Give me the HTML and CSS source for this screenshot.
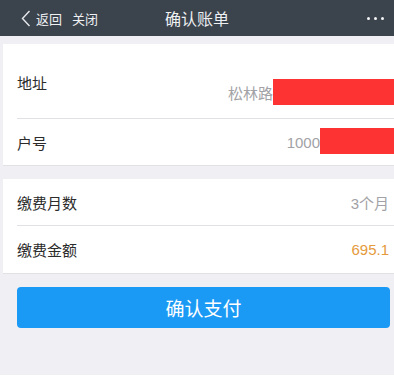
FILE: index.html
```html
<!DOCTYPE html>
<html lang="zh-CN">
<head>
    <meta charset="UTF-8">
    <meta name="viewport" content="width=device-width, initial-scale=1.0">
    <title>确认账单</title>
    <link rel="stylesheet" href="styles.css">
</head>
<body>
    <header class="top-bar">
        <div class="nav-left">
            <svg class="back-icon" width="10" height="17" viewBox="0 0 10 17">
                <path d="M8.5 1 L1.5 8.5 L8.5 16" fill="none" stroke="#e6e8eb" stroke-width="1.4"/>
            </svg>
            <span class="nav-link">返回</span>
            <span class="nav-link close">关闭</span>
        </div>
        <h1 class="page-title">确认账单</h1>
        <div class="more-dots">
            <span></span><span></span><span></span>
        </div>
    </header>

    <main class="content">
        <section class="card">
            <div class="row address-row">
                <span class="row-label">地址</span>
                <span class="row-value masked">松林路<span class="mask"></span></span>
            </div>
            <div class="row short-row">
                <span class="row-label">户号</span>
                <span class="row-value masked">1000<span class="mask short"></span></span>
            </div>
        </section>

        <section class="card">
            <div class="row">
                <span class="row-label">缴费月数</span>
                <span class="row-value">3个月</span>
            </div>
            <div class="row">
                <span class="row-label">缴费金额</span>
                <span class="row-value amount">695.1</span>
            </div>
        </section>

        <button class="pay-btn">确认支付</button>
    </main>

    <footer class="bottom-strip"></footer>
</body>
</html>
```

FILE: styles.css
```css
:root {
    --bar-bg: #3b434d;
    --page-bg: #efeff4;
    --line: #e1e1e5;
    --text-dark: #2b2b2b;
    --text-gray: #a2a2a6;
    --amount-color: #e59a3c;
    --btn-blue: #1b9af5;
    --mask-red: #fd3232;
}

* {
    margin: 0;
    padding: 0;
    box-sizing: border-box;
    font-family: "Liberation Sans", "Noto Sans CJK SC", sans-serif;
}

body {
    background-color: var(--page-bg);
    width: 394px;
    height: 380px;
    overflow: hidden;
}

.top-bar {
    height: 36px;
    background-color: var(--bar-bg);
    display: flex;
    align-items: center;
    position: relative;
    color: #eef0f2;
}

.nav-left {
    display: flex;
    align-items: center;
    padding-left: 21px;
}

.back-icon {
    margin-right: 5px;
}

.nav-link {
    font-size: 13px;
}

.nav-link.close {
    margin-left: 10px;
}

.page-title {
    position: absolute;
    left: 0;
    right: 0;
    text-align: center;
    font-size: 16px;
    font-weight: normal;
    pointer-events: none;
}

.more-dots {
    margin-left: auto;
    margin-right: 10px;
    display: flex;
    gap: 4px;
}

.more-dots span {
    width: 3px;
    height: 3px;
    border-radius: 50%;
    background-color: #f4f5f6;
}

.content {
    padding: 8px 0 0 3px;
    height: 339px;
}

.card {
    background-color: #fff;
    padding-left: 14px;
    border-bottom: 1px solid var(--line);
    margin-bottom: 13px;
}

.row {
    height: 47px;
    display: flex;
    align-items: center;
    justify-content: space-between;
    border-bottom: 1px solid var(--line);
    padding-right: 5px;
}

.row:last-child {
    border-bottom: none;
}

.short-row {
    height: 46px;
}

.row-label {
    font-size: 15px;
    color: var(--text-dark);
}

.row-value {
    font-size: 15px;
    color: var(--text-gray);
    display: flex;
    align-items: center;
}

.row-value.masked {
    margin-right: -5px;
}

.amount {
    color: var(--amount-color);
}

.mask {
    display: inline-block;
    width: 121px;
    height: 26px;
    background-color: var(--mask-red);
}

.mask.short {
    width: 74px;
    margin-top: -3px;
}

.address-row {
    height: 75px;
    align-items: flex-start;
}

.address-row .row-label {
    margin-top: 28px;
}

.address-row .row-value {
    margin-top: 35px;
}

.pay-btn {
    display: block;
    width: 373px;
    height: 41px;
    margin: 1px 0 0 14px;
    background-color: var(--btn-blue);
    color: #fff;
    border: none;
    border-radius: 4px;
    font-size: 19px;
}

.bottom-strip {
    height: 5px;
    background-color: #fff;
}
```
